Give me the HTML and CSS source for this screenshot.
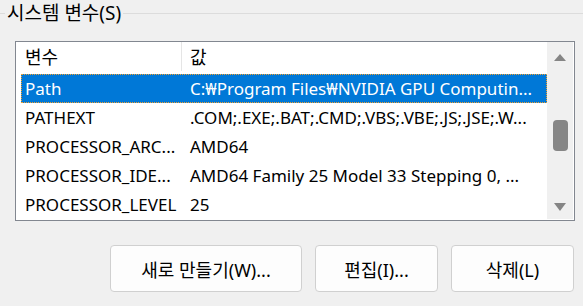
FILE: index.html
```html
<!DOCTYPE html>
<html lang="ko">
<head>
    <meta charset="UTF-8">
    <title>시스템 변수</title>
    <link rel="stylesheet" href="styles.css">
</head>
<body>
    <div class="group">
        <div class="group-title">
            <span class="rule short"></span>
            <span class="title">시스템 변수(S)</span>
            <span class="rule"></span>
        </div>

        <div class="listview">
            <div class="list-main">
                <div class="list-head">
                    <div class="cell col-name">변수</div>
                    <div class="cell col-value">값</div>
                </div>
                <div class="row selected">
                    <div class="cell col-name">Path</div>
                    <div class="cell col-value">C:₩Program Files₩NVIDIA GPU Computin...</div>
                </div>
                <div class="row">
                    <div class="cell col-name">PATHEXT</div>
                    <div class="cell col-value">.COM;.EXE;.BAT;.CMD;.VBS;.VBE;.JS;.JSE;.W...</div>
                </div>
                <div class="row">
                    <div class="cell col-name">PROCESSOR_ARC...</div>
                    <div class="cell col-value">AMD64</div>
                </div>
                <div class="row">
                    <div class="cell col-name">PROCESSOR_IDE...</div>
                    <div class="cell col-value">AMD64 Family 25 Model 33 Stepping 0, ...</div>
                </div>
                <div class="row">
                    <div class="cell col-name">PROCESSOR_LEVEL</div>
                    <div class="cell col-value">25</div>
                </div>
            </div>

            <div class="scrollbar">
                <div class="arrow-box up"><span class="arrow up"></span></div>
                <div class="track"><div class="thumb"></div></div>
                <div class="arrow-box down"><span class="arrow down"></span></div>
            </div>
        </div>
    </div>

    <div class="buttons">
        <button class="btn wide">새로 만들기(W)...</button>
        <button class="btn">편집(I)...</button>
        <button class="btn">삭제(L)</button>
    </div>
</body>
</html>
```

FILE: styles.css
```css
body {
    margin: 0;
    padding: 0;
    width: 583px;
    height: 306px;
    background-color: #f0f0f0;
    overflow: hidden;
    font-family: 'Noto Sans', 'Noto Sans CJK KR', sans-serif;
    font-size: 17px;
    color: #000;
}

/* Group box */
.group-title {
    display: flex;
    align-items: center;
    height: 27px;
}

.rule {
    flex: 1;
    height: 1px;
    background-color: #dcdcdc;
}

.rule.short {
    flex: 0 0 5px;
}

.title {
    padding: 0 2px;
    font-size: 19px;
    line-height: 27px;
    white-space: nowrap;
}

/* List view */
.listview {
    display: flex;
    margin: 14px 0 0 15px;
    width: 560px;
    height: 180px;
    box-sizing: border-box;
    border: 1px solid #828790;
    background-color: white;
}

.list-main {
    flex: 1;
    min-width: 0;
    padding-left: 5px;
}

.list-head {
    display: flex;
    height: 32px;
    font-size: 18px;
}

.list-head .cell {
    height: 29px;
    line-height: 30px;
}

.list-head .col-name {
    border-right: 1px solid #e5e5e5;
    box-sizing: border-box;
}

.row {
    display: flex;
    height: 29px;
    line-height: 29px;
}

.row.selected {
    background-color: #0078d7;
    color: white;
    outline: 1px dotted #f0a030;
    outline-offset: -1px;
}

.cell {
    white-space: nowrap;
    overflow: hidden;
}

.col-name {
    flex: 0 0 161px;
    padding-left: 4px;
    box-sizing: border-box;
}

.col-value {
    flex: 1;
    padding-left: 8px;
}

/* Scrollbar */
.scrollbar {
    display: flex;
    flex-direction: column;
    width: 26px;
    margin: 0 1px 1px 0;
    background-color: #f0f0f0;
}

.arrow-box {
    display: flex;
    justify-content: center;
    align-items: center;
}

.arrow-box.up {
    height: 31px;
}

.arrow-box.down {
    height: 24px;
}

.arrow {
    width: 0;
    height: 0;
    border-left: 6px solid transparent;
    border-right: 6px solid transparent;
}

.arrow.up {
    border-bottom: 7px solid #858585;
}

.arrow.down {
    border-top: 8px solid #858585;
}

.track {
    flex: 1;
    padding-top: 47px;
    display: flex;
    justify-content: center;
}

.thumb {
    width: 15px;
    height: 31px;
    border-radius: 4px;
    background-color: #868686;
}

/* Buttons */
.buttons {
    display: flex;
    justify-content: flex-end;
    gap: 13px;
    margin: 24px 9px 0 0;
}

.btn {
    width: 123px;
    height: 47px;
    background-color: #fdfdfd;
    border: 1px solid #d0d0d0;
    border-radius: 4px;
    font-family: 'Noto Sans', 'Noto Sans CJK KR', sans-serif;
    font-size: 18px;
    color: #000;
    padding: 0;
}

.btn.wide {
    width: 192px;
}
```
